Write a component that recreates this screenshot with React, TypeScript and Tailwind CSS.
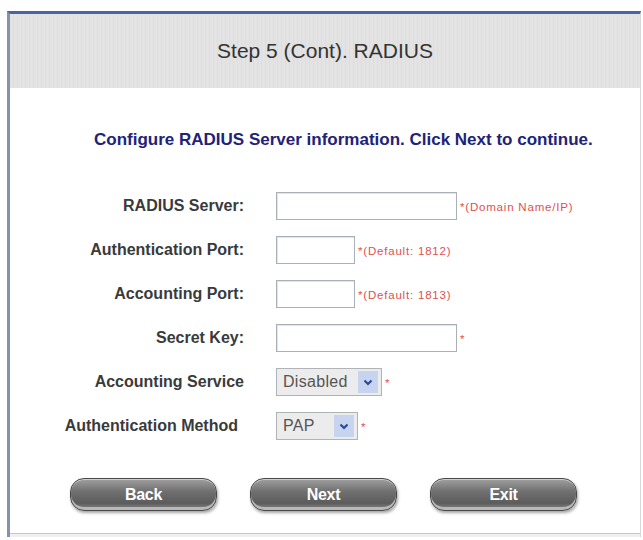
import React from "react";

const font = { fontFamily: '"Liberation Sans", Arial, sans-serif' };

function Label({ children, w = 234 }: { children: React.ReactNode; w?: number }) {
  return (
    <div
      className="shrink-0 text-right text-[16px] font-bold leading-[20px] text-[#3a3a3a]"
      style={{ width: w }}
    >
      {children}
    </div>
  );
}

function TextBox({ w }: { w: number }) {
  return (
    <div
      className="h-[28px] border border-[#a9b0b8] bg-white shadow-[inset_1px_1px_0_#e4e4e4]"
      style={{ width: w }}
    />
  );
}

function Hint({ children }: { children: React.ReactNode }) {
  return (
    <span className="ml-[3px] mt-[4px] text-[11.5px] tracking-[0.8px] text-[#e05050]">{children}</span>
  );
}

function Select({ value, w }: { value: string; w: number }) {
  return (
    <div
      className="flex h-[28px] items-center justify-between border border-[#b0b4b8] bg-[#ececec] pl-[6px] pr-[3px]"
      style={{ width: w }}
    >
      <span className="text-[16px] tracking-[0.3px] text-[#555]">{value}</span>
      <span className="flex h-[22px] w-[20px] items-center justify-center bg-[#c6d4f0]">
        <svg width="10" height="7" viewBox="0 0 10 7">
          <path d="M1.5 1.5 L5 5 L8.5 1.5" stroke="#2a4a9a" strokeWidth="2.2" fill="none" />
        </svg>
      </span>
    </div>
  );
}

function Button({ label }: { label: string }) {
  return (
    <div className="flex h-[33px] w-[147px] items-center justify-center rounded-[14px] border border-[#4a4a4a] bg-[linear-gradient(#a0a0a0,#707070_40%,#5c5c5c_78%,#8c8c8c)] shadow-[1px_2px_3px_rgba(0,0,0,0.35),inset_0_1px_0_#cfcfcf,inset_0_-3px_0_#b8b8b8]">
      <span className="text-[16px] font-bold text-white tracking-[-0.3px]">{label}</span>
    </div>
  );
}

export default function App() {
  return (
    <div className="h-[540px] w-[643px] overflow-hidden bg-white" style={font}>
      <div className="ml-[7px] mt-[11px] flex h-[526px] w-[634px] flex-col border-l-[3px] border-t-[3px] border-r border-l-[#8592aa] border-t-[#4a64a0] border-r-[#d8d8d8]">
        {/* header band */}
        <div className="flex h-[74px] items-center justify-center bg-[#e2e2e2] bg-[repeating-linear-gradient(90deg,#e3e3e3_0px,#e3e3e3_3px,#d9d9d9_4px)]">
          <span className="text-[21px] text-[#333]">Step 5 (Cont). RADIUS</span>
        </div>

        <div className="flex flex-1 flex-col bg-white">
          <div className="mt-[42px] pl-[84px] text-[17px] font-bold leading-[20px] text-[#22227a]">
            Configure RADIUS Server information. Click Next to continue.
          </div>

          <div className="mt-[42px] flex flex-col gap-[16px]">
            <div className="flex items-center">
              <Label>RADIUS Server:</Label>
              <div className="ml-[32px] flex items-center">
                <TextBox w={181} />
                <Hint>*(Domain Name/IP)</Hint>
              </div>
            </div>
            <div className="flex items-center">
              <Label>Authentication Port:</Label>
              <div className="ml-[32px] flex items-center">
                <TextBox w={79} />
                <Hint>*(Default: 1812)</Hint>
              </div>
            </div>
            <div className="flex items-center">
              <Label>Accounting Port:</Label>
              <div className="ml-[32px] flex items-center">
                <TextBox w={79} />
                <Hint>*(Default: 1813)</Hint>
              </div>
            </div>
            <div className="flex items-center">
              <Label>Secret Key:</Label>
              <div className="ml-[32px] flex items-center">
                <TextBox w={181} />
                <Hint>*</Hint>
              </div>
            </div>
            <div className="flex items-center">
              <Label>Accounting Service</Label>
              <div className="ml-[32px] flex items-center">
                <Select value="Disabled" w={106} />
                <Hint>*</Hint>
              </div>
            </div>
            <div className="flex items-center">
              <Label w={228}>Authentication Method</Label>
              <div className="ml-[38px] flex items-center">
                <Select value="PAP" w={82} />
                <Hint>*</Hint>
              </div>
            </div>
          </div>

          <div className="mt-[38px] flex gap-[33px] pl-[60px]">
            <Button label="Back" />
            <Button label="Next" />
            <Button label="Exit" />
          </div>
        </div>

        <div className="h-[4px] border-t border-[#c8c8c8] bg-[#f0f0f0]" />
      </div>
    </div>
  );
}
